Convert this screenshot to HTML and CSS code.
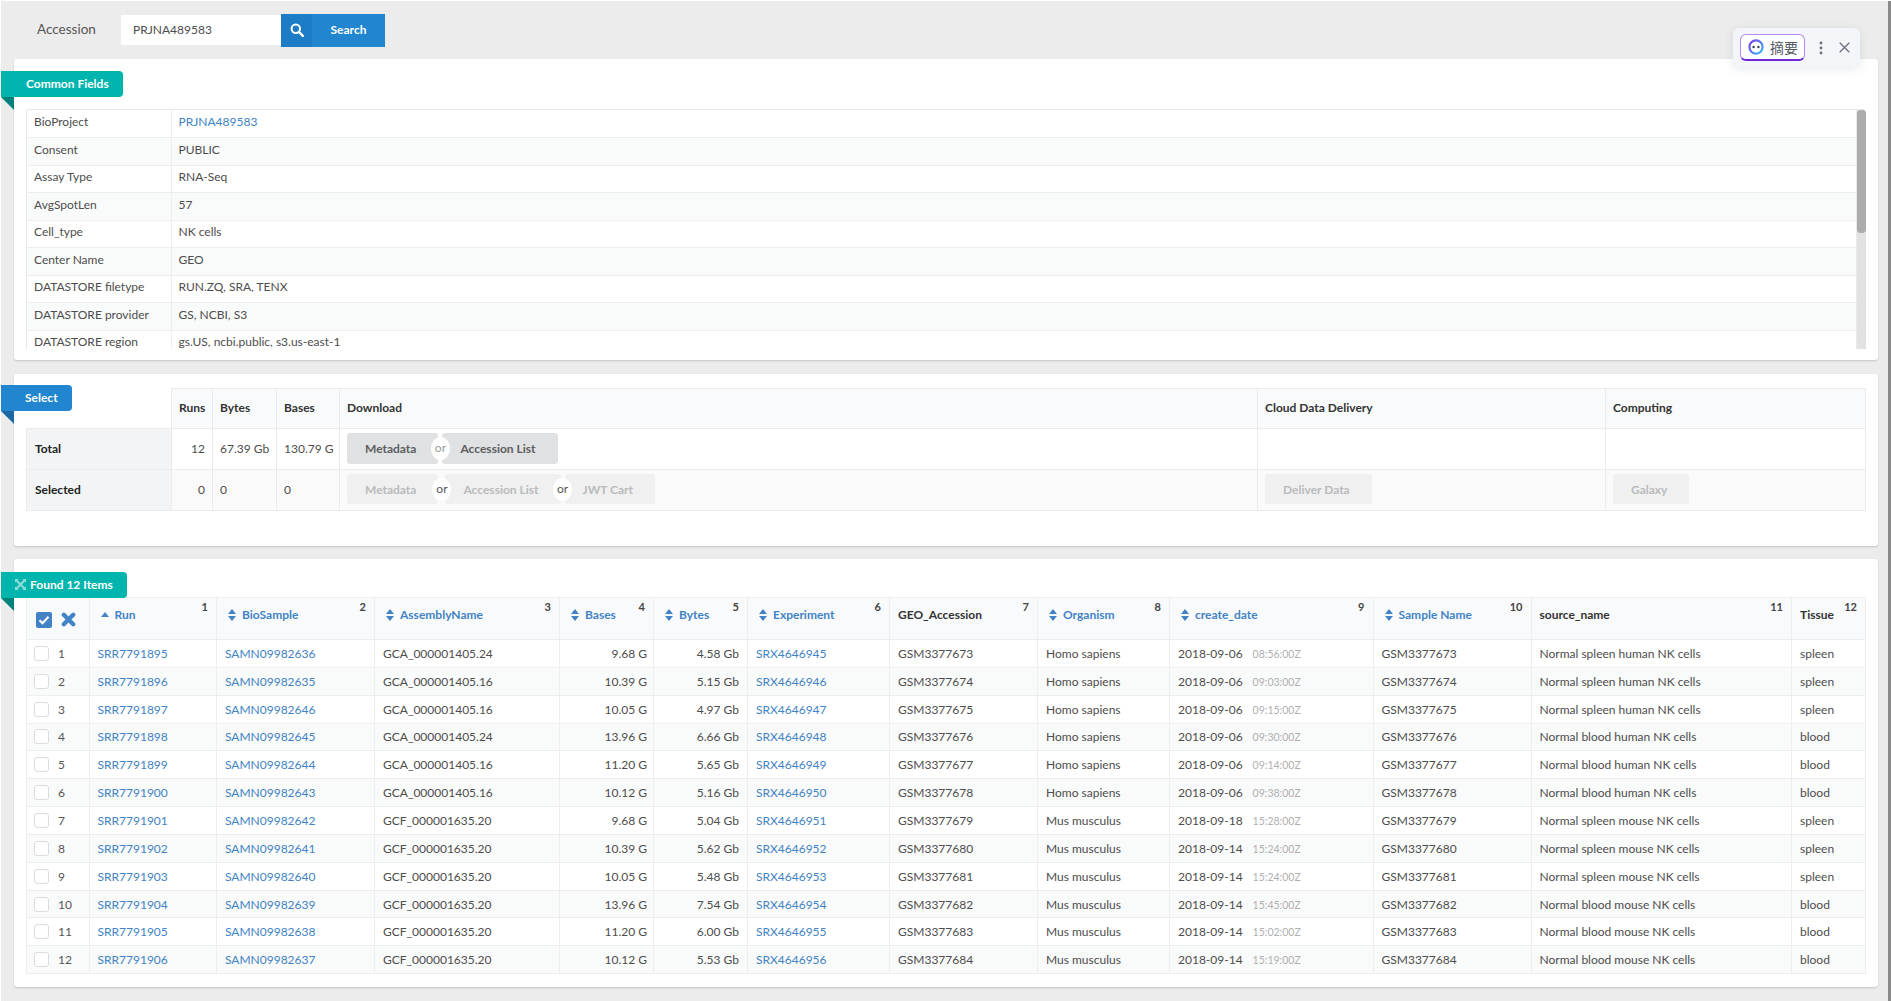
FILE: index.html
```html
<!DOCTYPE html>
<html lang="en">
<head>
<meta charset="utf-8">
<title>SRA Run Selector</title>
<link rel="stylesheet" href="styles.css">
</head>
<body>
<div class="app">
<main class="main">
  <form class="search">
    <label class="search-label">Accession</label>
    <input class="search-input" value="PRJNA489583">
    <button class="search-btn" type="button">
      <span class="search-icon"><svg width="14" height="14" viewBox="0 0 14 14"><circle cx="5.8" cy="5.8" r="4.2" fill="none" stroke="#fff" stroke-width="2"/><path d="M9 9l3.8 3.8" stroke="#fff" stroke-width="2.4" stroke-linecap="round"/></svg></span>
      <span class="search-text">Search</span>
    </button>
  </form>

  <section class="card card-fields">
    <div class="ribbon teal">Common Fields</div>
    <div class="fields-wrap">
      <table class="fields">
        <tr><td class="fk">BioProject</td><td><a href="#">PRJNA489583</a></td></tr>
        <tr><td class="fk">Consent</td><td>PUBLIC</td></tr>
        <tr><td class="fk">Assay Type</td><td>RNA-Seq</td></tr>
        <tr><td class="fk">AvgSpotLen</td><td>57</td></tr>
        <tr><td class="fk">Cell_type</td><td>NK cells</td></tr>
        <tr><td class="fk">Center Name</td><td>GEO</td></tr>
        <tr><td class="fk">DATASTORE filetype</td><td>RUN.ZQ, SRA, TENX</td></tr>
        <tr><td class="fk">DATASTORE provider</td><td>GS, NCBI, S3</td></tr>
        <tr><td class="fk">DATASTORE region</td><td>gs.US, ncbi.public, s3.us-east-1</td></tr>
      </table>
      <div class="track"><div class="thumb"></div></div>
    </div>
  </section>

  <section class="card card-select">
    <div class="ribbon blue">Select</div>
    <table class="select">
      <colgroup><col class="s0"><col class="s1"><col class="s2"><col class="s3"><col class="s4"><col class="s5"><col class="s6"></colgroup>
      <tr class="head">
        <th class="blank"></th><th>Runs</th><th>Bytes</th><th>Bases</th><th>Download</th><th>Cloud Data Delivery</th><th>Computing</th>
      </tr>
      <tr>
        <th class="side">Total</th><td class="num">12</td><td>67.39 Gb</td><td>130.79 G</td>
        <td><div class="btns"><span class="btn">Metadata</span><span class="or narrow"><span>or</span></span><span class="btn">Accession List</span></div></td>
        <td></td><td></td>
      </tr>
      <tr class="alt">
        <th class="side">Selected</th><td class="num">0</td><td>0</td><td>0</td>
        <td><div class="btns off"><span class="btn">Metadata</span><span class="or wide"><span>or</span></span><span class="btn">Accession List</span><span class="or"><span>or</span></span><span class="btn">JWT Cart</span></div></td>
        <td><div class="btns off"><span class="btn">Deliver Data</span></div></td>
        <td><div class="btns off"><span class="btn">Galaxy</span></div></td>
      </tr>
    </table>
  </section>

  <section class="card card-found">
    <div class="ribbon teal found">
      <svg class="expand" width="11" height="11" viewBox="0 0 12 12"><path d="M0 0h4L2.8 1.2 6 4.4 9.2 1.2 8 0h4v4L10.8 2.8 7.6 6l3.2 3.2L12 8v4H8l1.2-1.2L6 7.6l-3.2 3.2L4 12H0V8l1.2 1.2L4.4 6 1.2 2.8 0 4z" fill="#8fdcd8"/></svg>
      Found 12 Items
    </div>
    <table class="runs">
      <colgroup><col class="r0"><col class="r1"><col class="r2"><col class="r3"><col class="r4"><col class="r5"><col class="r6"><col class="r7"><col class="r8"><col class="r9"><col class="r10"><col class="r11"><col class="r12"></colgroup>
      <thead>
        <tr>
          <th class="tools">
            <div class="tool-row">
              <svg width="16" height="16" viewBox="0 0 16 16"><rect width="16" height="16" rx="2" fill="#4183c4"/><path d="M3.5 8.2l3 3 6-6.4" fill="none" stroke="#fff" stroke-width="2.2"/></svg>
              <svg width="15" height="15" viewBox="0 0 14 14"><path d="M2.6 2.6l8.8 8.8M11.4 2.6l-8.8 8.8" stroke="#4183c4" stroke-width="4" stroke-linecap="round"/></svg>
            </div>
          </th>
          <th><sup class="n">1</sup><a href="#"><i class="sort asc"></i>Run</a></th>
          <th><sup class="n">2</sup><a href="#"><i class="sort"></i>BioSample</a></th>
          <th><sup class="n">3</sup><a href="#"><i class="sort"></i>AssemblyName</a></th>
          <th><sup class="n">4</sup><a href="#"><i class="sort"></i>Bases</a></th>
          <th><sup class="n">5</sup><a href="#"><i class="sort"></i>Bytes</a></th>
          <th><sup class="n">6</sup><a href="#"><i class="sort"></i>Experiment</a></th>
          <th><sup class="n">7</sup>GEO_Accession</th>
          <th><sup class="n">8</sup><a href="#"><i class="sort"></i>Organism</a></th>
          <th><sup class="n">9</sup><a href="#"><i class="sort"></i>create_date</a></th>
          <th><sup class="n">10</sup><a href="#"><i class="sort"></i>Sample Name</a></th>
          <th><sup class="n">11</sup>source_name</th>
          <th><sup class="n">12</sup>Tissue</th>
        </tr>
      </thead>
      <tbody>
        <tr><td><div class="rowno"><span class="cb"></span>1</div></td><td><a href="#">SRR7791895</a></td><td><a href="#">SAMN09982636</a></td><td>GCA_000001405.24</td><td class="num">9.68 G</td><td class="num">4.58 Gb</td><td><a href="#">SRX4646945</a></td><td>GSM3377673</td><td>Homo sapiens</td><td>2018-09-06<small>08:56:00Z</small></td><td>GSM3377673</td><td>Normal spleen human NK cells</td><td>spleen</td></tr>
        <tr><td><div class="rowno"><span class="cb"></span>2</div></td><td><a href="#">SRR7791896</a></td><td><a href="#">SAMN09982635</a></td><td>GCA_000001405.16</td><td class="num">10.39 G</td><td class="num">5.15 Gb</td><td><a href="#">SRX4646946</a></td><td>GSM3377674</td><td>Homo sapiens</td><td>2018-09-06<small>09:03:00Z</small></td><td>GSM3377674</td><td>Normal spleen human NK cells</td><td>spleen</td></tr>
        <tr><td><div class="rowno"><span class="cb"></span>3</div></td><td><a href="#">SRR7791897</a></td><td><a href="#">SAMN09982646</a></td><td>GCA_000001405.16</td><td class="num">10.05 G</td><td class="num">4.97 Gb</td><td><a href="#">SRX4646947</a></td><td>GSM3377675</td><td>Homo sapiens</td><td>2018-09-06<small>09:15:00Z</small></td><td>GSM3377675</td><td>Normal spleen human NK cells</td><td>spleen</td></tr>
        <tr><td><div class="rowno"><span class="cb"></span>4</div></td><td><a href="#">SRR7791898</a></td><td><a href="#">SAMN09982645</a></td><td>GCA_000001405.24</td><td class="num">13.96 G</td><td class="num">6.66 Gb</td><td><a href="#">SRX4646948</a></td><td>GSM3377676</td><td>Homo sapiens</td><td>2018-09-06<small>09:30:00Z</small></td><td>GSM3377676</td><td>Normal blood human NK cells</td><td>blood</td></tr>
        <tr><td><div class="rowno"><span class="cb"></span>5</div></td><td><a href="#">SRR7791899</a></td><td><a href="#">SAMN09982644</a></td><td>GCA_000001405.16</td><td class="num">11.20 G</td><td class="num">5.65 Gb</td><td><a href="#">SRX4646949</a></td><td>GSM3377677</td><td>Homo sapiens</td><td>2018-09-06<small>09:14:00Z</small></td><td>GSM3377677</td><td>Normal blood human NK cells</td><td>blood</td></tr>
        <tr><td><div class="rowno"><span class="cb"></span>6</div></td><td><a href="#">SRR7791900</a></td><td><a href="#">SAMN09982643</a></td><td>GCA_000001405.16</td><td class="num">10.12 G</td><td class="num">5.16 Gb</td><td><a href="#">SRX4646950</a></td><td>GSM3377678</td><td>Homo sapiens</td><td>2018-09-06<small>09:38:00Z</small></td><td>GSM3377678</td><td>Normal blood human NK cells</td><td>blood</td></tr>
        <tr><td><div class="rowno"><span class="cb"></span>7</div></td><td><a href="#">SRR7791901</a></td><td><a href="#">SAMN09982642</a></td><td>GCF_000001635.20</td><td class="num">9.68 G</td><td class="num">5.04 Gb</td><td><a href="#">SRX4646951</a></td><td>GSM3377679</td><td>Mus musculus</td><td>2018-09-18<small>15:28:00Z</small></td><td>GSM3377679</td><td>Normal spleen mouse NK cells</td><td>spleen</td></tr>
        <tr><td><div class="rowno"><span class="cb"></span>8</div></td><td><a href="#">SRR7791902</a></td><td><a href="#">SAMN09982641</a></td><td>GCF_000001635.20</td><td class="num">10.39 G</td><td class="num">5.62 Gb</td><td><a href="#">SRX4646952</a></td><td>GSM3377680</td><td>Mus musculus</td><td>2018-09-14<small>15:24:00Z</small></td><td>GSM3377680</td><td>Normal spleen mouse NK cells</td><td>spleen</td></tr>
        <tr><td><div class="rowno"><span class="cb"></span>9</div></td><td><a href="#">SRR7791903</a></td><td><a href="#">SAMN09982640</a></td><td>GCF_000001635.20</td><td class="num">10.05 G</td><td class="num">5.48 Gb</td><td><a href="#">SRX4646953</a></td><td>GSM3377681</td><td>Mus musculus</td><td>2018-09-14<small>15:24:00Z</small></td><td>GSM3377681</td><td>Normal spleen mouse NK cells</td><td>spleen</td></tr>
        <tr><td><div class="rowno"><span class="cb"></span>10</div></td><td><a href="#">SRR7791904</a></td><td><a href="#">SAMN09982639</a></td><td>GCF_000001635.20</td><td class="num">13.96 G</td><td class="num">7.54 Gb</td><td><a href="#">SRX4646954</a></td><td>GSM3377682</td><td>Mus musculus</td><td>2018-09-14<small>15:45:00Z</small></td><td>GSM3377682</td><td>Normal blood mouse NK cells</td><td>blood</td></tr>
        <tr><td><div class="rowno"><span class="cb"></span>11</div></td><td><a href="#">SRR7791905</a></td><td><a href="#">SAMN09982638</a></td><td>GCF_000001635.20</td><td class="num">11.20 G</td><td class="num">6.00 Gb</td><td><a href="#">SRX4646955</a></td><td>GSM3377683</td><td>Mus musculus</td><td>2018-09-14<small>15:02:00Z</small></td><td>GSM3377683</td><td>Normal blood mouse NK cells</td><td>blood</td></tr>
        <tr><td><div class="rowno"><span class="cb"></span>12</div></td><td><a href="#">SRR7791906</a></td><td><a href="#">SAMN09982637</a></td><td>GCF_000001635.20</td><td class="num">10.12 G</td><td class="num">5.53 Gb</td><td><a href="#">SRX4646956</a></td><td>GSM3377684</td><td>Mus musculus</td><td>2018-09-14<small>15:19:00Z</small></td><td>GSM3377684</td><td>Normal blood mouse NK cells</td><td>blood</td></tr>
      </tbody>
    </table>
  </section>
</main>
<div class="edge"></div>
</div>

<aside class="widget">
  <button class="summary" type="button">
    <svg width="16" height="16" viewBox="0 0 16 16"><defs><linearGradient id="ring" x1="0" y1="0" x2="1" y2="1"><stop offset="0" stop-color="#7c3aed"/><stop offset="1" stop-color="#38bdf8"/></linearGradient></defs><circle cx="8" cy="8" r="6.6" fill="#fff" stroke="url(#ring)" stroke-width="2.2"/><circle cx="5.6" cy="8" r="1.2" fill="#3a3f4b"/><circle cx="10.4" cy="8" r="1.2" fill="#3a3f4b"/></svg>
    <span>摘要</span>
  </button>
  <svg class="dots" width="4" height="14" viewBox="0 0 4 14"><circle cx="2" cy="2" r="1.4" fill="#69707d"/><circle cx="2" cy="7" r="1.4" fill="#69707d"/><circle cx="2" cy="12" r="1.4" fill="#69707d"/></svg>
  <svg class="close" width="11" height="11" viewBox="0 0 11 11"><path d="M.7.7l9.6 9.6M10.3.7L.7 10.3" stroke="#69707d" stroke-width="1.3"/></svg>
</aside>
</body>
</html>
```
FILE: styles.css
```css
* { box-sizing: border-box; }
html, body { margin: 0; padding: 0; height: 100%; }
body {
  background: #fff;
  font-family: Lato, "Noto Sans", sans-serif;
  font-size: 12px;
  color: #4d4d4d;
  overflow: hidden;
}
a { color: #4183c4; text-decoration: none; }
table { border-collapse: collapse; table-layout: fixed; }

.app { display: flex; height: 1001px; padding-top: 1px; padding-left: 1px; }
.main { flex: 1; min-width: 0; background: #ececec; padding: 0 10px 0 13px; }
.edge { width: 3px; background: #8a8a8a; }

/* search */
.search { display: flex; align-items: center; height: 58px; padding-left: 23px; }
.search-label { width: 84px; font-size: 13.5px; color: #555; line-height: 1; padding-bottom: 1px; }
.search-input {
  width: 160px; height: 30px; border: 0; background: #fff; padding: 0 0 2px 12px;
  font: 12px Lato, sans-serif; color: #4d4d4d; outline: 0;
}
.search-btn {
  display: flex; align-items: stretch; width: 104px; height: 33px; padding: 0; border: 0;
  background: #2185d0; color: #fff; font: 700 12px Lato, sans-serif;
}
.search-icon { width: 31px; display: flex; align-items: center; justify-content: center; background: #1c7cc5; }
.search-text { flex: 1; display: flex; align-items: center; justify-content: center; padding-bottom: 2px; }

/* cards */
.card {
  position: relative; background: #fff; border-radius: 3px;
  box-shadow: 0 1px 2px rgba(34, 36, 38, .2);
}
.card-fields { height: 301px; padding: 50px 12px 0; margin-bottom: 14px; }
.card-select { height: 172px; padding: 14px 12px 0; margin-bottom: 13px; }
.card-found { height: 428px; padding: 38px 12px 0; }

.ribbon {
  position: absolute; left: -13px; top: 12px; height: 26px; padding: 0 14px 2px 25px;
  display: flex; align-items: center; color: #fff; font-weight: 700; font-size: 12px;
  border-radius: 0 4px 4px 0; z-index: 2;
}
.ribbon::after {
  content: ""; position: absolute; left: 0; top: 100%; width: 0; height: 0;
  border-style: solid; border-width: 0 13px 13px 0; border-color: transparent;
}
.ribbon.teal { background: #00b5ad; }
.ribbon.teal::after { border-right-color: #00827c; }
.ribbon.blue { background: #2185d0; width: 71px; top: 11px; padding-left: 24px; }
.ribbon.blue::after { border-right-color: #1a69a4; }
.ribbon.found { top: 13px; padding-left: 14px; gap: 4px; }

/* common fields */
.fields-wrap {
  position: relative; height: 240px; overflow: hidden;
  border: 1px solid #e8e9e9; border-right: 0; border-bottom: 0; border-radius: 3px 3px 0 0;
}
.fields { width: calc(100% - 9px); border-right: 1px solid #e8e9e9; }
.fields tr { height: 27.5px; }
.fields td { padding: 0 7px 4px; border-bottom: 1px solid #eeeeef; white-space: nowrap; }
.fields .fk { width: 144px; border-right: 1px solid #eeeeef; }
.fields tr:nth-child(even) td { background: #f9fafa; }
.track { position: absolute; top: 0; right: 0; bottom: 0; width: 9px; background: #e2e2e2; }
.thumb { height: 123px; background: #acacac; border-radius: 4px; }

/* select */
.select { width: 1839px; color: #4d4d4d; }
.s0 { width: 145px; } .s1 { width: 41px; } .s2 { width: 64px; } .s3 { width: 63px; }
.s4 { width: 918px; } .s5 { width: 348px; } .s6 { width: 260px; }
.select th, .select td { border: 1px solid #ebebec; padding: 0 7px 2px; text-align: left; white-space: nowrap; }
.select tr { height: 41px; }
.select .head { height: 40px; }
.select .head th { background: #f9fafb; color: #333; }
.select .blank { background: #fff !important; border: 0; border-right: 1px solid #ebebec; border-bottom: 1px solid #ebebec; }
.select .side { background: #f3f4f5; color: #222; padding-left: 8px; }
.select .alt td { background: #fafafa; }
.select td.num { text-align: right; }
.btns { display: inline-flex; vertical-align: middle; }
.btn {
  display: flex; align-items: center; height: 31px; padding: 0 22px 0 18px; background: #e0e1e2;
  color: #5c5d5e; font-weight: 700; border-radius: 3px; white-space: nowrap;
}
.off .btn { height: 30px; background: #f0f0f1; color: #b9babb; }
.or { position: relative; width: 4px; z-index: 1; }
.or.wide { width: 7px; }
.or::before {
  content: ""; position: absolute; left: 50%; top: 50%; width: 19px; height: 23px;
  margin: -11.5px 0 0 -9.5px; background: #fff; border-radius: 50%;
}
.or span {
  position: absolute; left: 50%; top: 50%; transform: translate(-50%, -50%);
  font-size: 12px; color: #9a9b9c; line-height: 1;
}
.off .or span { color: #555; }

/* runs */
.runs { width: 1839px; }
.r0 { width: 62.5px; } .r1 { width: 127.5px; } .r2 { width: 158px; } .r3 { width: 185px; }
.r4 { width: 94px; } .r5 { width: 94px; } .r6 { width: 142px; } .r7 { width: 148px; }
.r8 { width: 132px; } .r9 { width: 203.5px; } .r10 { width: 158px; } .r11 { width: 260.5px; } .r12 { width: 74px; }
.runs th {
  position: relative; height: 42px; padding: 0 7px 8px 8px; background: #f9fafb; text-align: left;
  color: #333; font-weight: 700; border: 1px solid #edeeee; border-top-color: #f0f0f0; white-space: nowrap;
}
.runs th a { display: flex; align-items: center; }
.runs td { height: 27.85px; padding: 0 8px; border: 1px solid #eeeeef; white-space: nowrap; }
.runs tbody tr:nth-child(even) td { background: #f9fafa; }
.runs td.num { text-align: right; }
.runs td:nth-child(5) { padding-right: 6px; }
.runs small { font-size: 10.5px; color: #b0b0b0; margin-left: 10px; }
.n {
  position: absolute; top: 2px; right: 8px; font-size: 11px; line-height: 14px; font-weight: 700; color: #444;
  vertical-align: baseline;
}
.sort { position: relative; display: block; width: 8px; height: 12px; margin: 0 6px 0 3px; flex: none; }
.sort::before, .sort::after {
  content: ""; position: absolute; left: 0; border-style: solid; border-color: transparent;
}
.sort::before { top: 0; border-width: 0 4px 5px; border-bottom-color: #4183c4; }
.sort::after { bottom: 0; border-width: 5px 4px 0; border-top-color: #4183c4; }
.sort.asc::after { display: none; }
.sort.asc::before { top: 3px; }
.runs .tools { padding: 2px 0 0 9px; }
.tool-row { display: flex; align-items: center; gap: 9px; }
.rowno { display: flex; align-items: center; gap: 9px; margin-left: -1px; color: #555; }
.cb { width: 15px; height: 15px; background: #fff; border: 1px solid #dcdcdd; border-radius: 3px; }

/* widget */
.widget {
  position: absolute; left: 1733px; top: 28px; width: 127px; height: 39px;
  display: flex; align-items: center; padding-left: 7px; background: #f4f5f8; border-radius: 6px;
  box-shadow: 0 2px 10px rgba(60, 70, 90, .12); z-index: 5;
}
.summary {
  display: flex; align-items: center; gap: 6px; width: 65px; height: 27px; padding: 0 0 0 7px;
  background: #fff; border: 1px solid #b48af5; border-bottom: 2px solid #6d28d9; border-radius: 6px;
  font: 14px "Noto Sans CJK SC", sans-serif; color: #555b66;
}
.dots { margin-left: 14px; }
.close { margin-left: 16px; }
```
